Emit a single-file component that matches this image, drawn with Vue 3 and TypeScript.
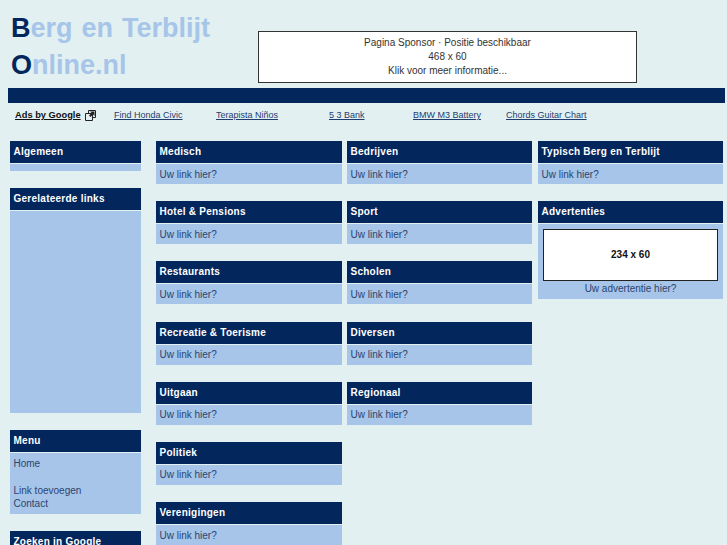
<template>
  <div class="page">
    <header class="top">
      <div class="logo">
        <div class="logo-line"><b>B</b>erg en Terblijt</div>
        <div class="logo-line"><b>O</b>nline.nl</div>
      </div>
      <a class="sponsor">
        Pagina Sponsor · Positie beschikbaar<br />468 x 60<br />Klik voor meer informatie...
      </a>
    </header>
    <div class="bar"></div>
    <div class="ads">
      <span class="ads-label">
        <u>Ads by Google</u>
        <svg width="11" height="11" viewBox="0 0 11 11" class="ads-icon">
          <path d="M3.5 3V.5h7v7H8M.5 3.5h7v7h-7z" fill="none" stroke="#222" />
          <path d="M5 1.5h4.5V6L8 4.5 5.5 7 4 5.5 6.5 3z" fill="#222" />
        </svg>
      </span>
      <a v-for="ad in ads" :key="ad.text" class="ad" :style="{ width: ad.width + 'px' }">{{ ad.text }}</a>
    </div>
    <main class="columns">
      <div class="col col-left">
        <section class="box">
          <h3>Algemeen</h3>
          <div class="body body-empty"></div>
        </section>
        <section class="box">
          <h3>Gerelateerde links</h3>
          <div class="body body-related"></div>
        </section>
        <section class="box">
          <h3>Menu</h3>
          <div class="body body-menu">
            <a>Home</a><br /><br /><a>Link toevoegen</a><br /><a>Contact</a>
          </div>
        </section>
        <section class="box">
          <h3>Zoeken in Google</h3>
          <div class="body"></div>
        </section>
      </div>
      <div v-for="(col, i) in linkCols" :key="i" class="col" :class="'col-' + (i + 1)">
        <section v-for="title in col" :key="title" class="box box-link">
          <h3>{{ title }}</h3>
          <div class="body">Uw link hier?</div>
        </section>
      </div>
      <div class="col col-right">
        <section class="box box-link">
          <h3>Typisch Berg en Terblijt</h3>
          <div class="body">Uw link hier?</div>
        </section>
        <section class="box">
          <h3>Advertenties</h3>
          <div class="body body-ad">
            <div class="ad-slot">234 x 60</div>
            <a>Uw advertentie hier?</a>
          </div>
        </section>
      </div>
    </main>
  </div>
</template>

<script setup lang="ts">
const ads = [
  { text: 'Find Honda Civic', width: 102 },
  { text: 'Terapista Niños', width: 113 },
  { text: '5 3 Bank', width: 84 },
  { text: 'BMW M3 Battery', width: 93 },
  { text: 'Chords Guitar Chart', width: 90 }
]

const linkCols = [
  ['Medisch', 'Hotel & Pensions', 'Restaurants', 'Recreatie & Toerisme', 'Uitgaan', 'Politiek', 'Verenigingen'],
  ['Bedrijven', 'Sport', 'Scholen', 'Diversen', 'Regionaal']
]
</script>

<style>
html, body { margin: 0; height: 100%; overflow: hidden; background: #e2f0f2; }
</style>

<style scoped>
.page {
  height: 545px;
  overflow: hidden;
  background: #e2f0f2;
  font-family: "Liberation Sans", Arial, sans-serif;
  font-size: 10px;
  color: #03265c;
}
.top { display: flex; height: 88px; }
.logo {
  width: 258px;
  padding: 10px 0 0 11px;
  box-sizing: border-box;
  font-size: 27px;
  line-height: 37px;
  font-weight: bold;
  color: #a6c5e8;
  word-spacing: 1.5px;
}
.logo b { color: #03265c; }
.sponsor {
  display: block;
  width: 377px;
  height: 46px;
  margin-top: 31px;
  padding-top: 4px;
  border: 1px solid #333;
  background: #fff;
  text-align: center;
  color: #333;
  line-height: 14px;
}
.bar { height: 15px; margin: 0 2px 0 8px; background: #03265c; }
.ads {
  display: flex;
  height: 38px;
  padding-top: 5px;
  box-sizing: border-box;
  align-items: flex-start;
  line-height: 14px;
  font-size: 9px;
}
.ads-label {
  display: flex;
  align-items: center;
  gap: 4px;
  width: 114px;
  padding-left: 15px;
  box-sizing: border-box;
  font-size: 9.3px;
  font-weight: bold;
  color: #111;
}
.ads-icon { flex: none; }
.ad { text-decoration: underline; color: #1f3c6e; white-space: nowrap; }
.columns { display: flex; }
.col { width: 185px; flex: none; }
.col-left { width: 131px; margin-left: 10px; }
.col-1 { width: 186px; margin-left: 15px; }
.col-2 { margin-left: 5px; }
.col-right { margin-left: 6px; }
.box { margin-bottom: 17px; }
.box-link { margin-bottom: 17.2px; }
h3 {
  margin: 0 0 1px;
  height: 22px;
  line-height: 21px;
  padding-left: 3.5px;
  background: #03265c;
  color: #fff;
  font-size: 10px;
  letter-spacing: 0.25px;
}
.body {
  min-height: 20px;
  padding: 3.5px 3.5px 2px;
  box-sizing: border-box;
  background: #a6c5e8;
  line-height: 14px;
  color: #2b4470;
}
.body-empty { min-height: 7px; height: 7px; padding: 0; }
.body-related { height: 202px; }
.body-menu { height: 61px; line-height: 13.6px; }
.body-ad { padding: 5px 5px 3px; height: 75px; text-align: center; }
.ad-slot {
  height: 50px;
  line-height: 50px;
  border: 1px solid #222;
  background: #fff;
  font-weight: bold;
  color: #111;
  margin-bottom: 1px;
}
</style>
